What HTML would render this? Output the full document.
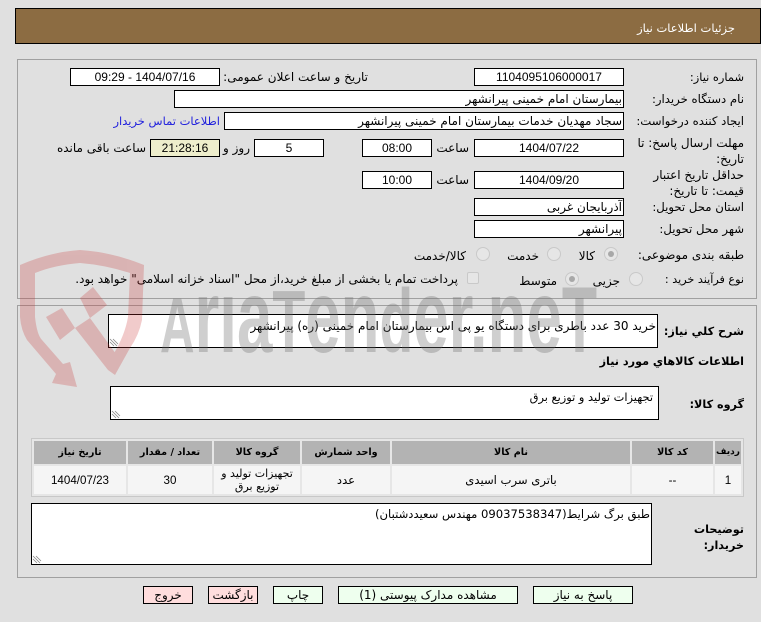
<!DOCTYPE html>
<html lang="fa"><head><meta charset="utf-8"><title>جزئیات اطلاعات نیاز</title>
<style>
html,body{margin:0;padding:0}
body{width:761px;height:622px;background:#e0e0e0;position:relative;overflow:hidden;font-family:"DejaVu Sans","Liberation Sans",sans-serif;font-size:12px;color:#000}
.a,.l,.f,.c,.b{position:absolute;box-sizing:border-box}
.l{direction:rtl;white-space:nowrap;line-height:15px;text-align:right}
.m{font-size:11.7px}
.f{background:#fff;border:1px solid #000;height:18px;line-height:16px;text-align:center;direction:rtl;white-space:nowrap;overflow:hidden}
.n{font-family:"Liberation Sans",sans-serif;font-size:12px}
.r{text-align:right;padding-right:1px}
.c{text-align:center;direction:rtl;display:flex;align-items:center;justify-content:center;line-height:13px;font-size:11px}
.h{background:#b3b3b3;font-weight:bold;top:441px;height:23px;font-size:9.6px}
.d{background:#f5f5f5;top:466px;height:28px}
.d.n{font-size:11.6px}
.b{top:586px;height:18px;border:1px solid #000;background:#eeffee;text-align:center;line-height:16px;direction:rtl}
.p{background:#ffdddd}
.rd{position:absolute;width:14px;height:14px;border-radius:50%;border:1px solid #c9c9c9;background:#e6e6e6;box-sizing:border-box}
.on::after{content:"";position:absolute;left:3px;top:3px;width:6px;height:6px;border-radius:50%;background:#a8a8a8}
.bd{font-weight:bold;font-size:11.2px}
svg{position:absolute}
</style></head><body>
<div class="a" style="left:15px;top:8px;width:746px;height:36px;background:#8c6c42;border:1px solid #000"></div>
<div class="l" style="right:26px;top:21px;color:#fff;font-size:11.5px">جزئیات اطلاعات نیاز</div>

<div class="a" style="left:17px;top:59px;width:740px;height:240px;border:1px solid #a0a0a0"></div>
<div class="a" style="left:17px;top:305px;width:740px;height:273px;border:1px solid #a0a0a0"></div>

<div class="l" style="right:17px;top:70px;font-size:11.4px">شماره نیاز:</div>
<div class="f n" style="left:474px;top:68px;width:150px">1104095106000017</div>
<div class="l" style="right:393px;top:70px">تاریخ و ساعت اعلان عمومی:</div>
<div class="f n" style="left:70px;top:68px;width:150px">1404/07/16 - 09:29</div>

<div class="l m" style="right:17px;top:92px">نام دستگاه خریدار:</div>
<div class="f r" style="left:174px;top:90px;width:450px">بیمارستان امام خمینی پیرانشهر</div>

<div class="l m" style="right:17px;top:114px">ایجاد کننده درخواست:</div>
<div class="f r" style="left:224px;top:112px;width:400px">سجاد مهدیان خدمات بیمارستان امام خمینی پیرانشهر</div>
<div class="l" style="right:541px;top:114px;color:#2222dd;font-size:11.5px">اطلاعات تماس خریدار</div>

<div class="l" style="right:17px;top:135px;width:112px;line-height:16px;white-space:normal">مهلت ارسال پاسخ: تا تاریخ:</div>
<div class="f n" style="left:474px;top:139px;width:150px">1404/07/22</div>
<div class="l" style="right:292px;top:141px">ساعت</div>
<div class="f n" style="left:362px;top:139px;width:70px">08:00</div>
<div class="f n" style="left:254px;top:139px;width:70px">5</div>
<div class="l" style="right:511px;top:141px">روز و</div>
<div class="f n" style="left:150px;top:139px;width:70px;background:#eeeecc">21:28:16</div>
<div class="l" style="right:615px;top:141px">ساعت باقی مانده</div>

<div class="l" style="right:17px;top:167px;width:112px;line-height:16px;white-space:normal">حداقل تاریخ اعتبار قیمت: تا تاریخ:</div>
<div class="f n" style="left:474px;top:171px;width:150px">1404/09/20</div>
<div class="l" style="right:292px;top:173px">ساعت</div>
<div class="f n" style="left:362px;top:171px;width:70px">10:00</div>

<div class="l m" style="right:17px;top:200px">استان محل تحویل:</div>
<div class="f r" style="left:474px;top:198px;width:150px">آذربایجان غربی</div>
<div class="l m" style="right:17px;top:222px">شهر محل تحویل:</div>
<div class="f r" style="left:474px;top:220px;width:150px">پیرانشهر</div>

<div class="l" style="right:17px;top:248px">طبقه بندی موضوعی:</div>
<div class="rd on" style="left:604px;top:247px"></div>
<div class="l" style="right:166px;top:249px">کالا</div>
<div class="rd" style="left:547px;top:247px"></div>
<div class="l" style="right:222px;top:249px">خدمت</div>
<div class="rd" style="left:476px;top:247px"></div>
<div class="l" style="right:295px;top:249px">کالا/خدمت</div>

<div class="l" style="right:17px;top:272px;font-size:11.2px">نوع فرآیند خرید :</div>
<div class="rd" style="left:629px;top:272px"></div>
<div class="l" style="right:141px;top:274px">جزیی</div>
<div class="rd on" style="left:565px;top:272px"></div>
<div class="l" style="right:204px;top:274px">متوسط</div>
<div class="a" style="left:467px;top:272px;width:12px;height:12px;border:1px solid #c9c9c9;border-radius:2px;background:#e6e6e6"></div>
<div class="l" style="right:303px;top:272px">پرداخت تمام یا بخشی از مبلغ خرید،از محل "اسناد خزانه اسلامی" خواهد بود.</div>

<div class="l bd" style="right:17px;top:324px">شرح کلي نیاز:</div>
<div class="f r" style="left:108px;top:314px;width:550px;height:34px;line-height:22px">خرید 30 عدد  باطری برای دستگاه یو پی اس بیمارستان امام خمینی (ره) پیرانشهر</div>
<svg style="left:109px;top:337px" width="10" height="10"><path d="M1 2L8 9M4 2L9 7M1 5L5 9" stroke="#888" stroke-width=".8"/></svg>

<div class="l bd" style="right:17px;top:354px">اطلاعات کالاهاي مورد نیاز</div>

<div class="l bd" style="right:17px;top:397px">گروه کالا:</div>
<div class="f" style="left:110px;top:386px;width:549px;height:34px;text-align:right;padding-right:5px;line-height:21px;font-size:11.4px">تجهیزات تولید و توزیع برق</div>
<svg style="left:111px;top:409px" width="10" height="10"><path d="M1 2L8 9M4 2L9 7M1 5L5 9" stroke="#888" stroke-width=".8"/></svg>

<div class="a" style="left:31px;top:438px;width:713px;height:59px;background:#e6e6e6;border:1px solid #c8c8c8"></div>
<div class="c h" style="left:715px;width:26px;font-size:9px">ردیف</div>
<div class="c h" style="left:632px;width:81px">کد کالا</div>
<div class="c h" style="left:392px;width:238px">نام کالا</div>
<div class="c h" style="left:302px;width:88px">واحد شمارش</div>
<div class="c h" style="left:214px;width:86px">گروه کالا</div>
<div class="c h" style="left:128px;width:84px">تعداد / مقدار</div>
<div class="c h" style="left:34px;width:92px">تاریخ نیاز</div>
<div class="c d n" style="left:715px;width:26px">1</div>
<div class="c d n" style="left:632px;width:81px">--</div>
<div class="c d" style="left:392px;width:238px;font-size:11.6px">باتری سرب اسیدی</div>
<div class="c d" style="left:302px;width:88px;font-size:11.6px">عدد</div>
<div class="c d" style="left:214px;width:86px;padding:0 6px">تجهیزات تولید و توزیع برق</div>
<div class="c d n" style="left:128px;width:84px">30</div>
<div class="c d n" style="left:34px;width:92px">1404/07/23</div>

<div class="l bd" style="right:17px;top:522px;width:54px;line-height:16px;white-space:normal">توضیحات خریدار:</div>
<div class="f" style="left:31px;top:503px;width:621px;height:62px;text-align:right;line-height:20px;padding-right:1px;font-size:11.6px">طبق برگ شرایط(09037538347 مهندس سعیددشتبان)</div>
<svg style="left:32px;top:554px" width="10" height="10"><path d="M1 2L8 9M4 2L9 7M1 5L5 9" stroke="#888" stroke-width=".8"/></svg>

<div class="b" style="left:533px;width:100px">پاسخ به نیاز</div>
<div class="b" style="left:338px;width:180px">مشاهده مدارک پیوستی (1)</div>
<div class="b" style="left:273px;width:50px">چاپ</div>
<div class="b p" style="left:208px;width:50px">بازگشت</div>
<div class="b p" style="left:143px;width:50px">خروج</div>

<svg style="left:0;top:0;pointer-events:none" width="761" height="622" viewBox="0 0 761 622">
<g fill="#c83030" opacity=".25">
<path d="M20 265Q50 252 80 250Q112 252 144 265L142 320Q139 335 130 348L115 375L113 355Q125 335 128 317L130 273Q105 265 80 263Q55 265 35 273L35 317Q37 335 42 340L63 364L70 362L77 387L52 383L56 374L27 340Q21 330 20 317Z"/>
<path d="M75 328L90 318L116 354L115 375L108 370Z"/>
<path d="M80 298L93 287L107 305L90 318Z"/>
<path d="M46 317L62 308L75 328L60 340Z"/>
</g>
<text y="352" x="160" font-family="Liberation Sans" font-weight="bold" font-size="104" textLength="437" lengthAdjust="spacingAndGlyphs" fill="#6e6e6e" fill-opacity=".33"><tspan font-size="78">A</tspan>rıa<tspan font-size="88">T</tspan>en<tspan font-size="90">d</tspan>er.ne<tspan font-size="94">T</tspan></text>
</svg>
</body></html>
